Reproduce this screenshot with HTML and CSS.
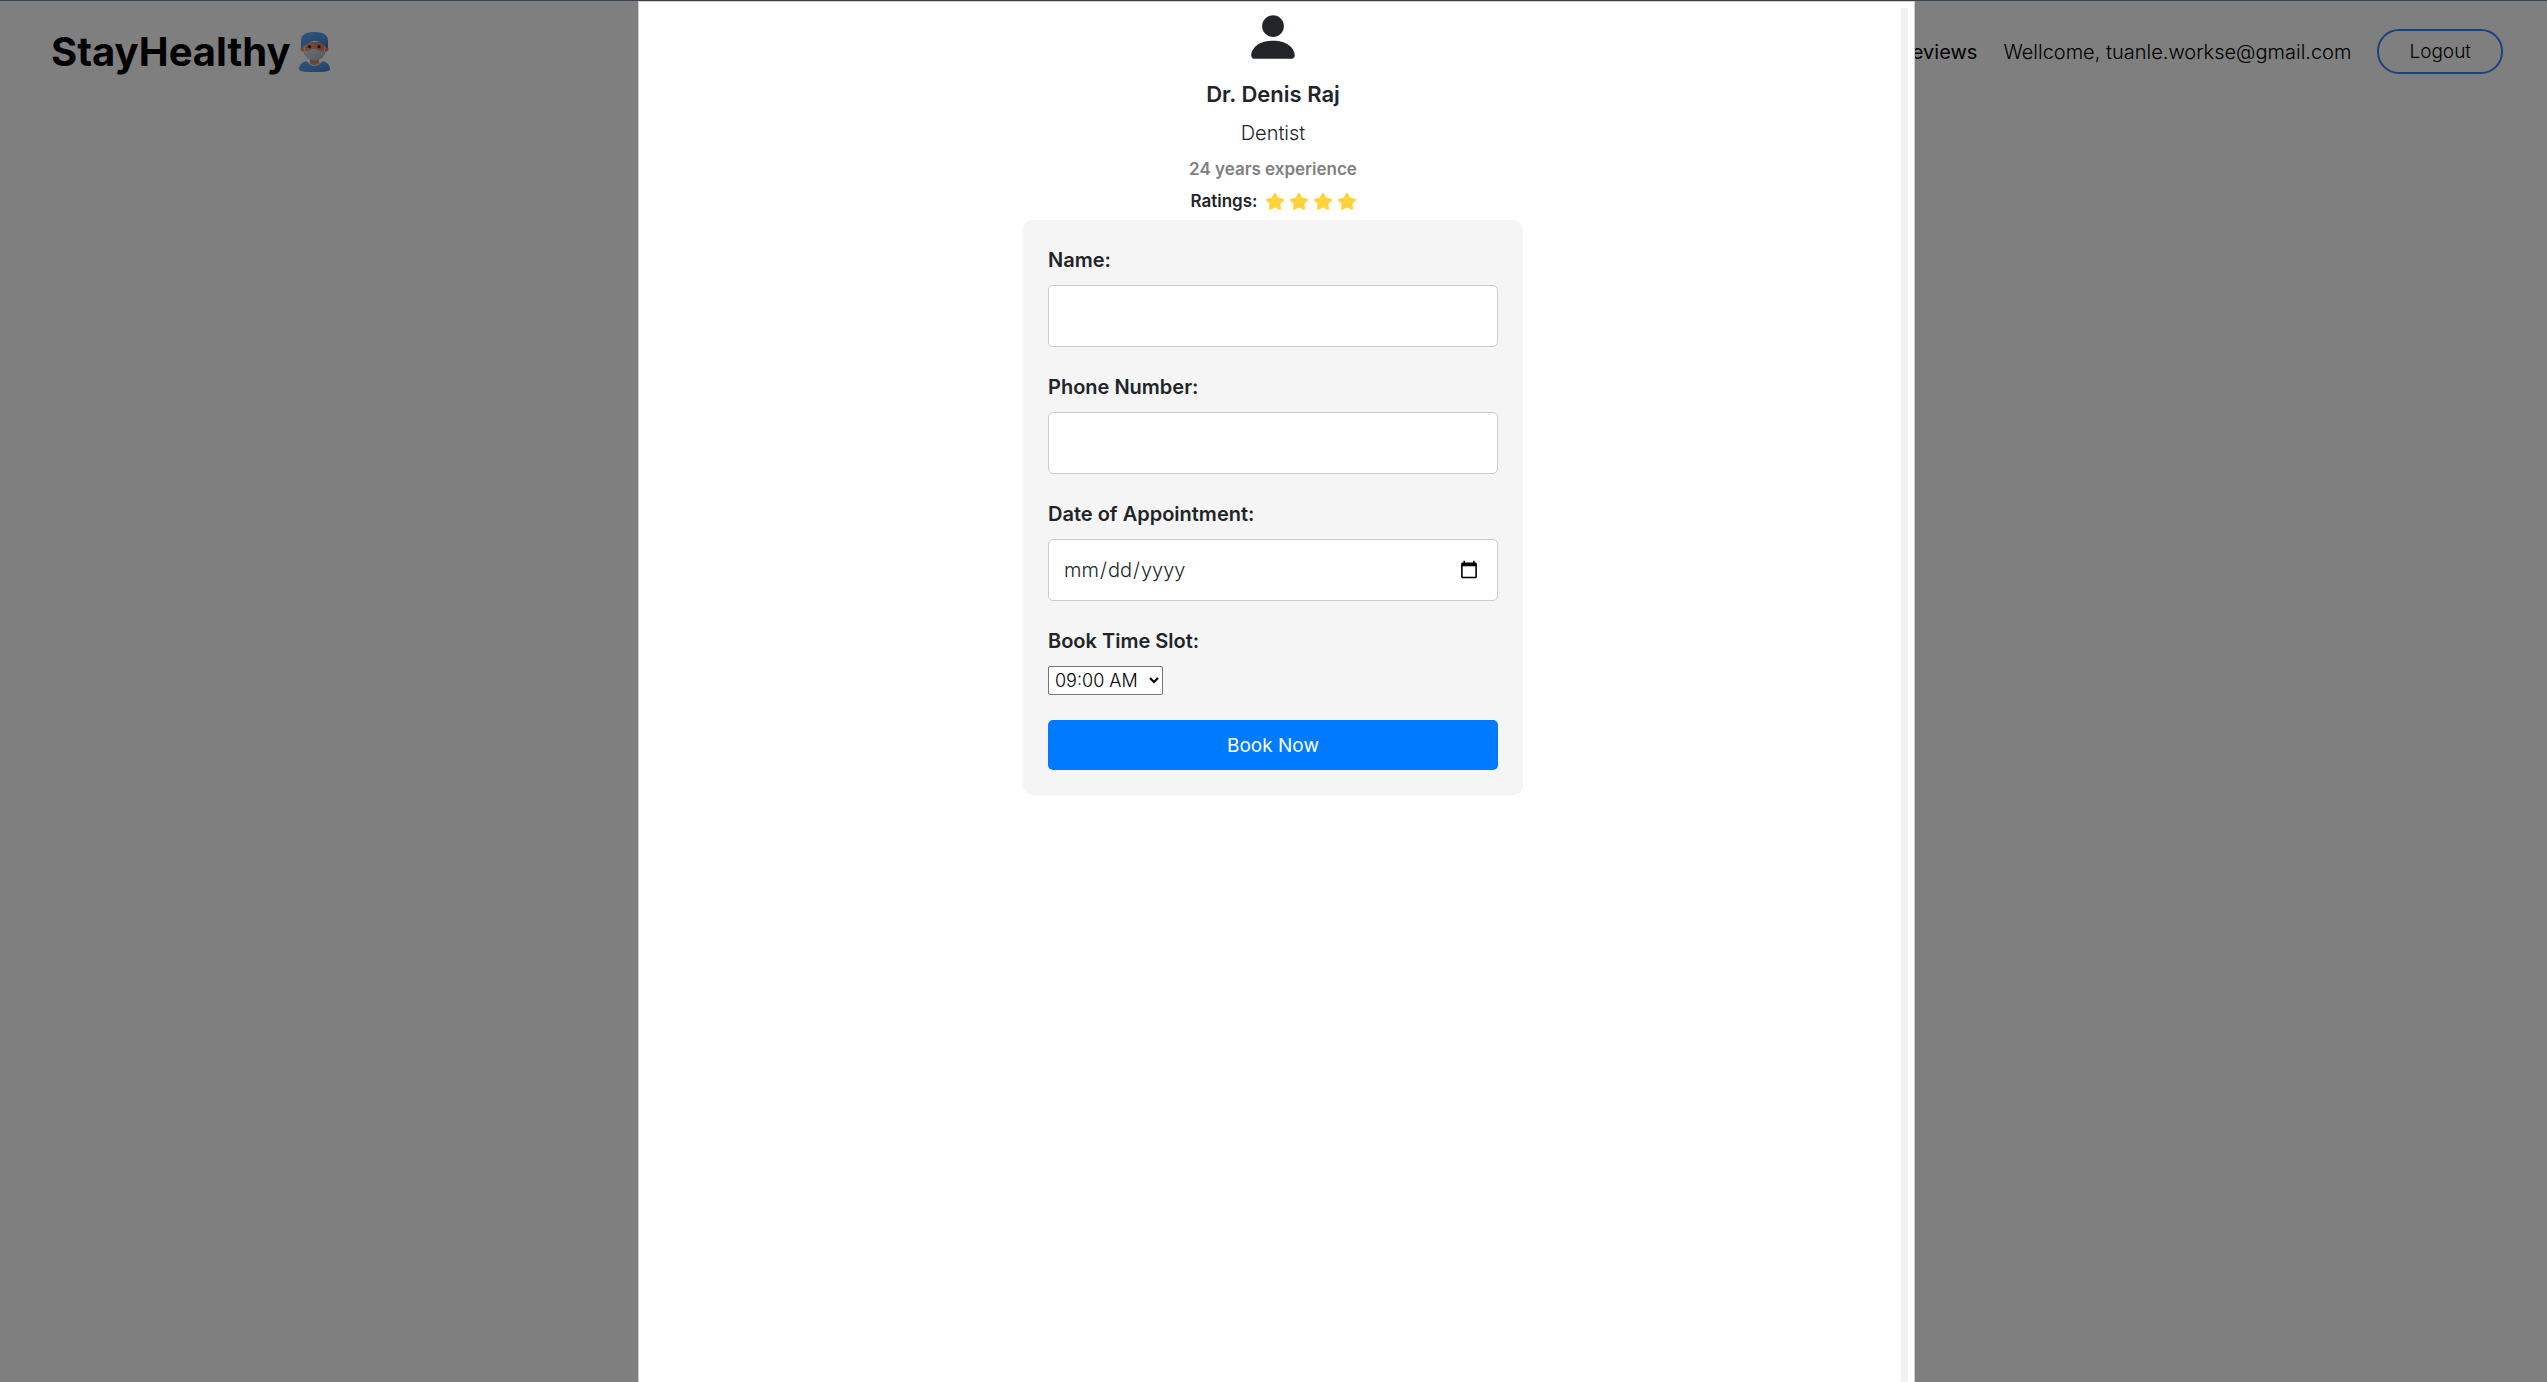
FILE: index.html
```html
<!DOCTYPE html>
<html lang="en">
<head>
  <meta charset="utf-8">
  <meta name="viewport" content="width=device-width, initial-scale=1">
  <title>StayHealthy</title>
  <link rel="stylesheet" href="styles.css">
</head>
<body>
  <nav class="navbar">
    <a class="brand" href="#">StayHealthy
      <svg class="brand-icon" viewBox="0 0 31 40" aria-hidden="true">
        <defs>
          <linearGradient id="scrubs" x1="0" x2="1" y1="0" y2="1">
            <stop offset="0" stop-color="#5cacf8"/>
            <stop offset="0.6" stop-color="#5098e8"/>
            <stop offset="1" stop-color="#4074b8"/>
          </linearGradient>
          <linearGradient id="skin" x1="0" x2="1">
            <stop offset="0" stop-color="#e0a080"/>
            <stop offset="1" stop-color="#e07860"/>
          </linearGradient>
          <linearGradient id="mask" x1="0" x2="1" y1="0" y2="1">
            <stop offset="0" stop-color="#e0e4e4"/>
            <stop offset="1" stop-color="#94b4bc"/>
          </linearGradient>
        </defs>
        <path fill="#d8d8dc" d="M7 29Q16 33 24 29L22 34H9Z"/>
        <path fill="url(#scrubs)" d="M7 29q4 5 8.500 5t8.500-5q7 2 7 8.500Q31 40 15.500 40T0 37.500Q0 31 7 29Z"/>
        <path fill="#d88868" d="M11 27h9v4q-4.500 4-9 0Z"/>
        <circle cx="4" cy="17" r="2.500" fill="#d88868"/>
        <circle cx="27" cy="17" r="2.500" fill="#d87860"/>
        <path fill="url(#skin)" d="M4 10h23v8q-2 10-11.500 10T4 18Z"/>
        <path fill="url(#mask)" d="M5 19q4 0 6-1 4-2.500 8 0 2 1 7 1-1 9-10.500 9.500Q6 28 5 19Z"/>
        <path fill="none" stroke="#e8dcd8" d="M5.500 20 5 12M25.500 20l.5-8"/>
        <path fill="url(#scrubs)" d="M2 16V9Q2 0 15.500 0T29 9v7q-2 .5-3-2-10-10-21 0-1 2.500-3 2Z"/>
        <circle cx="10.500" cy="14.700" r="1.600" fill="#332822"/>
        <circle cx="20" cy="14.700" r="1.600" fill="#332822"/>
      </svg>
    </a>
    <div class="nav-links">
      <a class="nav-link" href="#">Reviews</a>
      <span>Wellcome, tuanle.workse@gmail.com</span>
      <button class="logout" type="button">Logout</button>
    </div>
  </nav>

  <div class="overlay">
    <section class="modal" role="dialog" aria-labelledby="doctor-name">
      <div class="modal-body">
        <header class="doctor">
          <svg class="avatar" viewBox="0 0 16 16" fill="currentColor" aria-hidden="true">
            <path d="M3 14s-1 0-1-1 1-4 6-4 6 3 6 4-1 1-1 1H3Zm5-6a3 3 0 1 0 0-6 3 3 0 0 0 0 6Z"/>
          </svg>
          <h1 class="doctor-name" id="doctor-name">Dr. Denis Raj</h1>
          <p class="speciality">Dentist</p>
          <p class="experience">24 years experience</p>
          <div class="ratings">
            <span>Ratings:</span>
            <svg class="star" viewBox="0 0 18 17" aria-hidden="true"><path d="M7.700.8q1.300-1.600 2.600 0l2 4 4.500.7q1.900.5.8 2.200l-3.300 3.200.8 4.500q0 1.900-1.800 1.300L9 14.500l-4.300 2.200q-1.800.6-1.800-1.300l.8-4.500L.4 7.700q-1.100-1.700.8-2.200l4.500-.7Z"/></svg>
            <svg class="star" viewBox="0 0 18 17" aria-hidden="true"><path d="M7.700.8q1.300-1.600 2.600 0l2 4 4.500.7q1.900.5.8 2.200l-3.300 3.200.8 4.500q0 1.900-1.800 1.300L9 14.500l-4.300 2.200q-1.800.6-1.800-1.300l.8-4.500L.4 7.700q-1.100-1.700.8-2.200l4.500-.7Z"/></svg>
            <svg class="star" viewBox="0 0 18 17" aria-hidden="true"><path d="M7.700.8q1.300-1.600 2.600 0l2 4 4.500.7q1.900.5.8 2.200l-3.300 3.200.8 4.500q0 1.900-1.800 1.300L9 14.500l-4.300 2.200q-1.800.6-1.800-1.300l.8-4.500L.4 7.700q-1.100-1.700.8-2.200l4.500-.7Z"/></svg>
            <svg class="star" viewBox="0 0 18 17" aria-hidden="true"><path d="M7.700.8q1.300-1.600 2.600 0l2 4 4.500.7q1.900.5.8 2.200l-3.300 3.200.8 4.500q0 1.900-1.800 1.300L9 14.500l-4.300 2.200q-1.800.6-1.800-1.300l.8-4.500L.4 7.700q-1.100-1.700.8-2.200l4.500-.7Z"/></svg>
          </div>
        </header>

        <form class="booking">
          <div class="field">
            <label for="name">Name:</label>
            <input class="control" id="name" type="text">
          </div>
          <div class="field">
            <label for="phone">Phone Number:</label>
            <input class="control" id="phone" type="tel">
          </div>
          <div class="field">
            <label for="date">Date of Appointment:</label>
            <input class="control" id="date" type="date">
          </div>
          <div class="field">
            <label for="slot">Book Time Slot:</label>
            <select class="slot" id="slot">
              <option>09:00 AM</option>
            </select>
          </div>
          <button class="submit" type="submit">Book Now</button>
        </form>
      </div>
      <div class="scroll-track"></div>
    </section>
  </div>
</body>
</html>
```
FILE: styles.css
```css
* {
  box-sizing: border-box;
}

body {
  margin: 0;
  border-top: 1px solid #3d4449;
  background: #fff;
  color: #212529;
  font: 400 20px/30px Inter, sans-serif;
}

button,
input,
select {
  font-family: inherit;
}

.navbar {
  display: flex;
  align-items: center;
  justify-content: space-between;
  height: 101px;
  padding: 0 44px 0 51px;
  color: #000;
}

.brand {
  display: flex;
  align-items: center;
  gap: 8px;
  color: inherit;
  font-size: 40px;
  font-weight: 700;
  line-height: 48px;
  text-decoration: none;
}

.brand-icon {
  width: 31px;
  height: 40px;
}

.nav-links {
  display: flex;
  align-items: center;
  gap: 26px;
  font-weight: 300;
}

.nav-link {
  color: inherit;
  font-weight: 400;
  text-decoration: none;
}

.logout {
  height: 45px;
  padding: 0 30px;
  border: 2px solid #3685fb;
  border-radius: 22px;
  background: transparent;
  color: #000;
  font-size: 19px;
  font-weight: 300;
}

.overlay {
  position: fixed;
  inset: 1px 0 0;
  display: grid;
  grid-template-columns: 638fr 1277fr 632fr;
  background: rgba(0, 0, 0, 0.5);
}

.modal {
  grid-column: 2;
  display: flex;
  padding: 0 6px;
  border: solid #d0ccd4;
  border-width: 1px 1px 0;
  background: #fff;
}

.modal-body {
  flex: 1;
  display: flex;
  flex-direction: column;
  align-items: center;
  padding-top: 6px;
}

.scroll-track {
  width: 7px;
  margin-top: 6px;
  background: #f1f1f1;
}

.doctor {
  display: flex;
  flex-direction: column;
  align-items: center;
}

.avatar {
  width: 58px;
  height: 58px;
}

.doctor-name {
  margin: 12px 0 7px;
  font-size: 22px;
  font-weight: 600;
  line-height: 33px;
}

.speciality {
  margin: 0 0 8px;
  font-weight: 300;
}

.experience {
  margin: 0 0 6px;
  color: #808080;
  font-size: 17px;
  font-weight: 600;
  line-height: 26px;
}

.ratings {
  display: flex;
  align-items: center;
  gap: 6px;
  margin-bottom: 6px;
  font-size: 17px;
  font-weight: 600;
  line-height: 26px;
}

.ratings span {
  margin-right: 2px;
}

.star {
  width: 18px;
  height: 17px;
  fill: #ffd43b;
}

.booking {
  display: flex;
  flex-direction: column;
  gap: 25px;
  width: 500px;
  max-width: 100%;
  padding: 25px;
  border-radius: 10px;
  background: #f5f5f5;
}

.field {
  display: flex;
  flex-direction: column;
  align-items: flex-start;
  gap: 10px;
}

.field label {
  font-weight: 600;
}

.control {
  width: 100%;
  height: 62px;
  padding: 0 16px 0 14px;
  border: 1px solid #ccc;
  border-radius: 5px;
  background: #fff;
  color: #212529;
  font-size: 20px;
  font-weight: 300;
}

.slot {
  width: 115px;
  height: 29px;
  padding: 0 2px;
  border: 1px solid #767676;
  border-radius: 2px;
  background: #fff;
  color: #000;
  font-size: 18px;
  font-weight: 300;
}

.submit {
  height: 50px;
  border: 0;
  border-radius: 5px;
  background: #007bff;
  color: #fff;
  font-size: 19px;
}
```
